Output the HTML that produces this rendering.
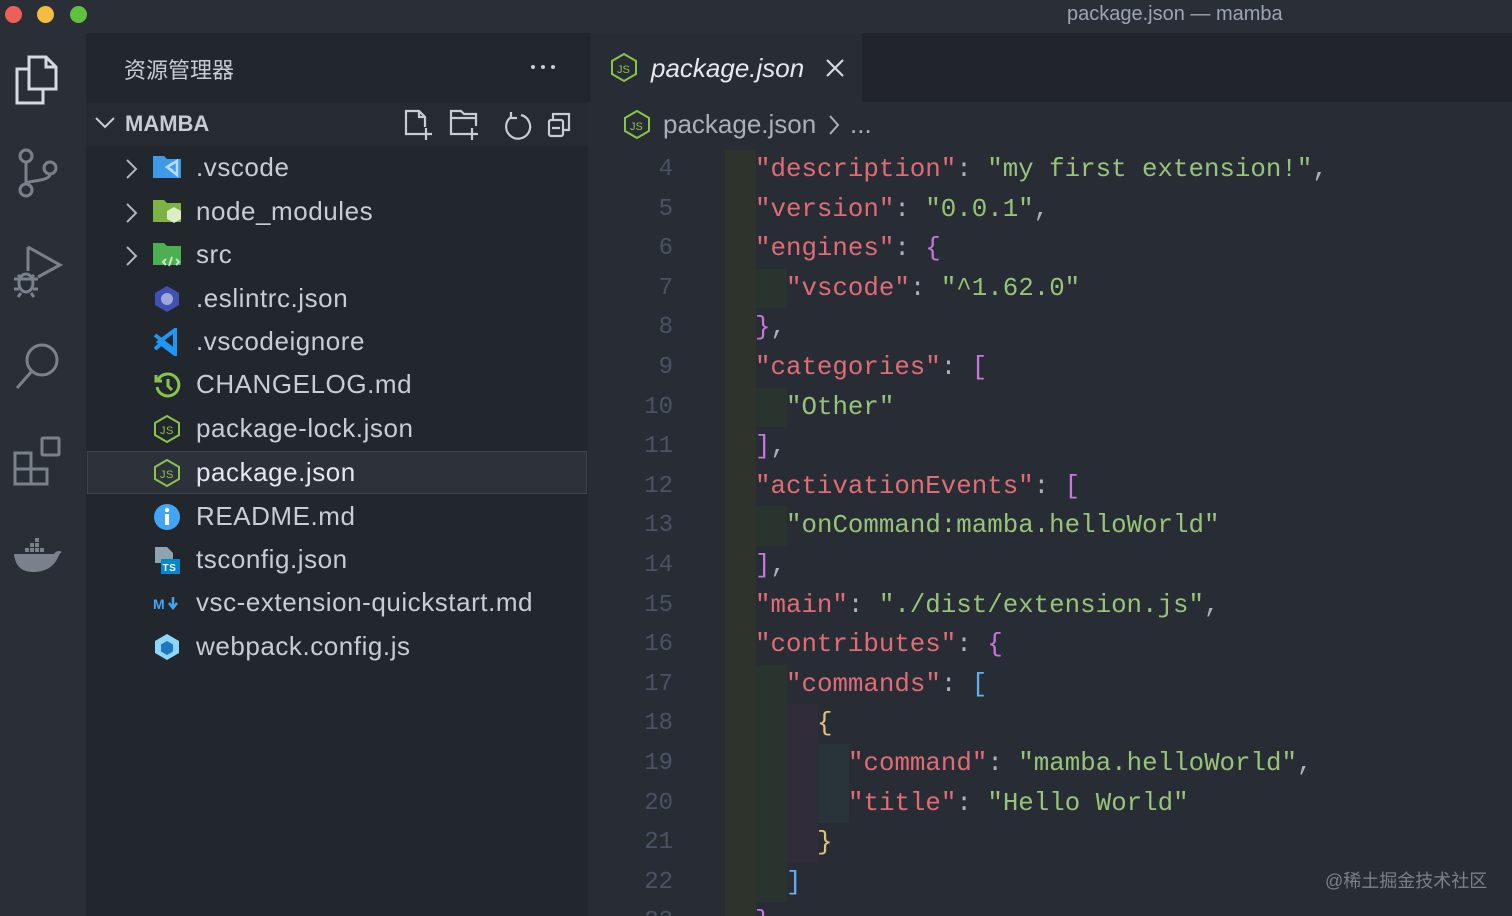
<!DOCTYPE html>
<html><head><meta charset="utf-8"><style>
*{margin:0;padding:0;box-sizing:border-box}
html,body{width:1512px;height:916px;overflow:hidden}
body{background:#282c34;position:relative;font-family:"Liberation Sans","Noto Sans CJK SC",sans-serif}
.abs{position:absolute}
#title{left:0;top:0;width:1512px;height:33px;background:#2a2e36}
.tl{top:6px;width:17px;height:17px;border-radius:50%}
#act{left:0;top:33px;width:86px;height:883px;background:#2a2e36}
#side{left:86px;top:33px;width:502px;height:883px;background:#22262d}
.row{position:absolute;left:86px;width:502px;height:43px;font-size:26px;letter-spacing:0.55px;color:#c8ccd4;line-height:43px}
.row .t{position:absolute;left:110px}
.row svg{position:absolute;left:67px;top:8px}
.row svg.ch{left:38px;top:12px}
#tabs{left:588px;top:33px;width:924px;height:69px;background:#21252b}
#tab{left:590px;top:33px;width:272px;height:69px;background:#282c34}
#codewrap{position:absolute;left:588px;top:0;width:924px;height:916px;overflow:hidden}
.code{position:absolute;left:0;height:39.6px;line-height:39.6px;font-family:"Liberation Mono",monospace;font-size:25.8px;white-space:pre;width:924px}
.ln{position:absolute;left:0;width:85px;text-align:right;color:#4b5263;font-size:24px}
.tx{position:absolute;left:138px}
.k{color:#e06c75}.s{color:#98c379}.p{color:#abb2bf}.m{color:#c678dd}.b{color:#61afef}.y{color:#e5c07b}
.g{position:absolute;top:0;height:39.6px;width:31px}
</style></head><body>
<div id="title" class="abs"></div>
<div class="abs" style="left:1067px;top:3px;font-size:20px;color:#9da5b4">package.json — mamba</div>
<div class="abs tl" style="left:5px;background:#ee5f57"></div>
<div class="abs tl" style="left:37px;background:#f5bd3f"></div>
<div class="abs tl" style="left:70px;background:#5fc23f"></div>
<div id="act" class="abs">
<svg class="abs" style="left:14px;top:22px" width="46" height="50" viewBox="0 0 46 50" fill="none" stroke="#d7dae0" stroke-width="3"><path d="M15 2h17l10 10v22H15z"/><path d="M32 2v10h10"/><path d="M15 14H3v34h26V34"/></svg>
<svg class="abs" style="left:17px;top:115px" width="42" height="50" viewBox="0 0 42 50" fill="none" stroke="#7b818c" stroke-width="3"><circle cx="9" cy="8" r="6"/><circle cx="9" cy="42" r="6"/><circle cx="33" cy="20" r="6"/><path d="M9 14v22M33 26c0 8-24 6-24 10"/></svg>
<svg class="abs" style="left:12px;top:210px" width="52" height="56" viewBox="0 0 52 56" fill="none" stroke="#7b818c" stroke-width="3"><path d="M16 4v24M16 4l32 18-22 12"/><ellipse cx="14" cy="40" rx="7" ry="9"/><path d="M2 36h24M2 46h5M21 46h5M6 32l3 3M22 32l-3 3M6 54l3-4M22 54l-3-4"/></svg>
<svg class="abs" style="left:14px;top:308px" width="48" height="50" viewBox="0 0 48 50" fill="none" stroke="#7b818c" stroke-width="3"><circle cx="28" cy="19" r="15"/><path d="M18 30L3 47"/></svg>
<svg class="abs" style="left:12px;top:402px" width="50" height="52" viewBox="0 0 50 52" fill="none" stroke="#7b818c" stroke-width="3"><rect x="3" y="18" width="16" height="16"/><rect x="3" y="34" width="16" height="15"/><rect x="19" y="34" width="16" height="15"/><rect x="30" y="3" width="17" height="17" rx="1"/></svg>
<svg class="abs" style="left:13px;top:505px" width="50" height="36" viewBox="0 0 50 36" fill="#7b818c"><rect x="12" y="10" width="4" height="4"/><rect x="17" y="10" width="4" height="4"/><rect x="22" y="10" width="4" height="4"/><rect x="27" y="10" width="4" height="4"/><rect x="17" y="5" width="4" height="4"/><rect x="22" y="5" width="4" height="4"/><rect x="22" y="0" width="4" height="4"/><path d="M1 16h40c2-3 5-4 8-2-2 1-3 3-4 5-4 10-13 15-25 15C8 34 2 27 1 16z"/></svg>
</div>
<div id="side" class="abs"></div>
<div class="abs" style="left:124px;top:53px;font-size:22px;color:#c8ccd4">资源管理器</div>
<svg class="abs" style="left:530px;top:64px" width="26" height="6"><circle cx="3" cy="3" r="2" fill="#c8ccd4"/><circle cx="13" cy="3" r="2" fill="#c8ccd4"/><circle cx="23" cy="3" r="2" fill="#c8ccd4"/></svg>
<div class="abs" style="left:86px;top:103px;width:502px;height:43px;background:#262a31"></div>
<svg class="abs" style="left:94px;top:116px" width="22" height="14" fill="none" stroke="#c8ccd4" stroke-width="2"><path d="M2 2l9 9 9-9"/></svg>
<div class="abs" style="left:125px;top:111px;font-size:22px;font-weight:bold;color:#c8ccd4">MAMBA</div>
<svg class="abs" style="left:403px;top:108px" width="175" height="34" viewBox="0 0 175 34" fill="none" stroke="#c8ccd4" stroke-width="2.2"><path d="M20 26H3V3h13l6 6v10M16 3v6h6M23 20v12M17 26h12"/><path d="M64 26H48V3h10l3 3h12v12M48 10h25M69 20v12M63 26h12"/><path d="M118 7a12 12 0 1 1-10 2M108 4v6h6"/><rect x="146" y="12" width="14" height="16" rx="2"/><path d="M150 12V6h16v16h-6M149 20h8"/></svg>
<div class="abs" style="left:87px;top:451px;width:500px;height:43px;background:#2c313a;border:1px solid #3e4452"></div>

<div class="row" style="top:146px"><svg class="ch" width="14" height="22" fill="none" stroke="#b0b6c0" stroke-width="2"><path d="M3 2l9 9-9 9"/></svg><svg width="30" height="26" viewBox="0 0 30 26"><path d="M0 2h11l3 3h14v19H0z" fill="#3f9ae8"/><path d="M14 13l10 8V7z M14 13l6-4M14 13l6 4" stroke="#b8dcff" stroke-width="2.5" fill="none"/></svg><span class="t">.vscode</span></div>
<div class="row" style="top:190px"><svg class="ch" width="14" height="22" fill="none" stroke="#b0b6c0" stroke-width="2"><path d="M3 2l9 9-9 9"/></svg><svg width="30" height="26" viewBox="0 0 30 26"><path d="M0 2h11l3 3h14v19H0z" fill="#7cb342"/><path d="M21 9l7 4v8l-7 4-7-4v-8z" fill="#dcedc8"/></svg><span class="t">node_modules</span></div>
<div class="row" style="top:233px"><svg class="ch" width="14" height="22" fill="none" stroke="#b0b6c0" stroke-width="2"><path d="M3 2l9 9-9 9"/></svg><svg width="30" height="26" viewBox="0 0 30 26"><path d="M0 2h11l3 3h14v19H0z" fill="#4caf50"/><path d="M13 18l-3 3 3 3M23 18l3 3-3 3M19 16l-3 9" stroke="#c8e6c9" stroke-width="2" fill="none"/></svg><span class="t">src</span></div>
<div class="row" style="top:277px"><svg width="28" height="28" viewBox="0 0 28 28"><path d="M14 1l12 7v12l-12 7-12-7V8z" fill="#3f51b5"/><circle cx="14" cy="14" r="6" fill="#9fa8da"/></svg><span class="t">.eslintrc.json</span></div>
<div class="row" style="top:320px"><svg width="28" height="28" viewBox="0 0 28 28"><path d="M22 2v24L6 14z M2 7l20 16M2 21l7-6" stroke="#2196f3" stroke-width="4" fill="none"/></svg><span class="t">.vscodeignore</span></div>
<div class="row" style="top:363px"><svg width="28" height="28" viewBox="0 0 28 28" fill="none" stroke="#8bc34a" stroke-width="3"><path d="M5 9a11 11 0 1 1-1 7M3 4v6h6M15 8v7l4 4"/></svg><span class="t">CHANGELOG.md</span></div>
<div class="row" style="top:407px"><svg width="28" height="28" viewBox="0 0 28 28" fill="none" stroke="#8bc34a" stroke-width="2"><path d="M14 1l12 7v12l-12 7-12-7V8z"/><text x="7" y="19" font-size="11" fill="#8bc34a" stroke="none" font-family="Liberation Sans">JS</text></svg><span class="t">package-lock.json</span></div>
<div class="row" style="top:451px;color:#e6e8ec"><svg width="28" height="28" viewBox="0 0 28 28" fill="none" stroke="#8bc34a" stroke-width="2"><path d="M14 1l12 7v12l-12 7-12-7V8z"/><text x="7" y="19" font-size="11" fill="#8bc34a" stroke="none" font-family="Liberation Sans">JS</text></svg><span class="t">package.json</span></div>
<div class="row" style="top:495px"><svg width="28" height="28" viewBox="0 0 28 28"><circle cx="14" cy="14" r="13" fill="#42a5f5"/><rect x="12" y="11" width="4" height="11" fill="#fff"/><circle cx="14" cy="7" r="2.2" fill="#fff"/></svg><span class="t">README.md</span></div>
<div class="row" style="top:538px"><svg width="28" height="30" viewBox="0 0 28 30"><path d="M2 1h12l6 6v10H2z" fill="#90a4ae"/><rect x="8" y="13" width="19" height="15" fill="#0288d1"/><text x="9.5" y="25" font-size="10" font-weight="bold" fill="#fff" font-family="Liberation Sans">TS</text></svg><span class="t">tsconfig.json</span></div>
<div class="row" style="top:581px"><svg width="30" height="28" viewBox="0 0 30 28"><text x="0" y="20" font-size="14" font-weight="bold" fill="#42a5f5" font-family="Liberation Sans">M</text><path d="M20 8v10M16 14l4 5 4-5" stroke="#42a5f5" stroke-width="2.5" fill="none"/></svg><span class="t">vsc-extension-quickstart.md</span></div>
<div class="row" style="top:625px"><svg width="28" height="28" viewBox="0 0 28 28"><path d="M14 1l12 7v12l-12 7-12-7V8z" fill="#8ed6fb"/><path d="M14 8l6 3.5v7L14 22l-6-3.5v-7z" fill="#1c78c0"/></svg><span class="t">webpack.config.js</span></div>

<div id="tabs" class="abs"></div>
<div id="tab" class="abs"></div>
<svg class="abs" style="left:610px;top:53px" width="28" height="30" viewBox="0 0 28 30" fill="none" stroke="#8bc34a" stroke-width="2"><path d="M14 1l12 7v13l-12 7-12-7V8z"/><text x="7" y="20" font-size="11" fill="#8bc34a" stroke="none" font-family="Liberation Sans">JS</text></svg>
<div class="abs" style="left:651px;top:53px;font-size:26px;font-style:italic;color:#e6e8ec">package.json</div>
<svg class="abs" style="left:825px;top:58px" width="20" height="20" fill="none" stroke="#d7dae0" stroke-width="2.2"><path d="M2 2l16 16M18 2L2 18"/></svg>
<svg class="abs" style="left:623px;top:110px" width="28" height="30" viewBox="0 0 28 30" fill="none" stroke="#8bc34a" stroke-width="2"><path d="M14 1l12 7v13l-12 7-12-7V8z"/><text x="7" y="20" font-size="11" fill="#8bc34a" stroke="none" font-family="Liberation Sans">JS</text></svg>
<div class="abs" style="left:663px;top:109px;font-size:26px;color:#a9b0bc">package.json</div>
<svg class="abs" style="left:827px;top:114px" width="14" height="22" fill="none" stroke="#a9b0bc" stroke-width="2"><path d="M3 2l8 9-8 9"/></svg>
<div class="abs" style="left:850px;top:109px;font-size:26px;color:#a9b0bc">...</div>

<div id="codewrap"><div id="code"></div></div>
<script>
var L=[
[4,[1],'<span class="k">"description"</span><span class="p">: </span><span class="s">"my first extension!"</span><span class="p">,</span>',0],
[5,[1],'<span class="k">"version"</span><span class="p">: </span><span class="s">"0.0.1"</span><span class="p">,</span>',0],
[6,[1],'<span class="k">"engines"</span><span class="p">: </span><span class="m">{</span>',0],
[7,[1,2],'<span class="k">"vscode"</span><span class="p">: </span><span class="s">"^1.62.0"</span>',1],
[8,[1],'<span class="m">}</span><span class="p">,</span>',0],
[9,[1],'<span class="k">"categories"</span><span class="p">: </span><span class="m">[</span>',0],
[10,[1,2],'<span class="s">"Other"</span>',1],
[11,[1],'<span class="m">]</span><span class="p">,</span>',0],
[12,[1],'<span class="k">"activationEvents"</span><span class="p">: </span><span class="m">[</span>',0],
[13,[1,2],'<span class="s">"onCommand:mamba.helloWorld"</span>',1],
[14,[1],'<span class="m">]</span><span class="p">,</span>',0],
[15,[1],'<span class="k">"main"</span><span class="p">: </span><span class="s">"./dist/extension.js"</span><span class="p">,</span>',0],
[16,[1],'<span class="k">"contributes"</span><span class="p">: </span><span class="m">{</span>',0],
[17,[1,2],'<span class="k">"commands"</span><span class="p">: </span><span class="b">[</span>',1],
[18,[1,2,3],'<span class="y">{</span>',2],
[19,[1,2,3,4],'<span class="k">"command"</span><span class="p">: </span><span class="s">"mamba.helloWorld"</span><span class="p">,</span>',3],
[20,[1,2,3,4],'<span class="k">"title"</span><span class="p">: </span><span class="s">"Hello World"</span>',3],
[21,[1,2,3],'<span class="y">}</span>',2],
[22,[1,2],'<span class="b">]</span>',1],
[23,[1],'<span class="m">}</span>',0]];
var gc=['','#2e332c','#29342f','#302c3a','#283439'],gx=[0,137,168,199,230];
var h='';
L.forEach(function(l){var top=150+(l[0]-4)*39.6;var g='';l[1].forEach(function(i){g+='<div class="g" style="left:'+gx[i]+'px;background:'+gc[i]+'"></div>'});
h+='<div class="code" style="top:'+top+'px">'+g+'<span class="ln">'+l[0]+'</span><span class="tx" style="left:'+(167+l[3]*31)+'px">'+l[2]+'</span></div>';});
document.getElementById('code').innerHTML=h;
</script>
<div class="abs" style="left:1325px;top:867px;font-size:18px;color:#7a808a">@稀土掘金技术社区</div>
</body></html>
